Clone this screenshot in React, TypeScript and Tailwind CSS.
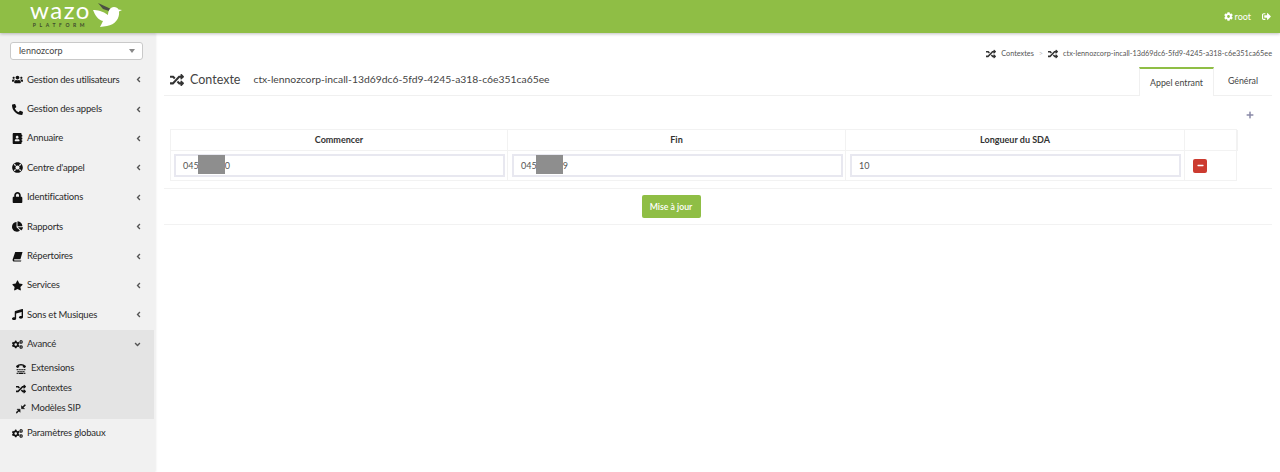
import {
  FaAddressBook,
  FaAngleDown,
  FaAngleLeft,
  FaChartPie,
  FaCog,
  FaCogs,
  FaLifeRing,
  FaLock,
  FaMinus,
  FaMusic,
  FaPhoneAlt,
  FaPlus,
  FaRandom,
  FaSignOutAlt,
  FaStar,
  FaTty,
  FaUsers,
} from "react-icons/fa";
import type { IconType } from "react-icons";

// slanted book, the package's one is upright
const BookIcon: IconType = (props) => (
  <svg viewBox="0 0 12 12" fill="currentColor" {...props}>
    <path d="M3.5 1H11.5L9.2 9H2.8C2.2 9 2 9.6 2.4 10C2.6 10.2 2.9 10.3 3.2 10.3H10.2L9.8 11.5H2.5C1.4 11.5 0.5 10.6 0.7 9.4Z" />
  </svg>
);

// two arrows on the diagonal
const DiagonalIcon: IconType = (props) => (
  <svg viewBox="0 0 12 12" fill="currentColor" stroke="currentColor" strokeWidth="0.7" {...props}>
    <path d="M11.5 1.5L8.8 4.2 10.2 5.6 6.6 5.6 6.6 2 7.9 3.3 10.6 0.6Z" />
    <path d="M0.8 11.2L3.5 8.5 4.9 9.9 4.9 6.3 1.3 6.3 2.6 7.6 0 10.3Z" />
  </svg>
);

const menu: { label: string; icon: IconType }[] = [
  { label: "Gestion des utilisateurs", icon: FaUsers },
  { label: "Gestion des appels", icon: FaPhoneAlt },
  { label: "Annuaire", icon: FaAddressBook },
  { label: "Centre d'appel", icon: FaLifeRing },
  { label: "Identifications", icon: FaLock },
  { label: "Rapports", icon: FaChartPie },
  { label: "Répertoires", icon: BookIcon },
  { label: "Services", icon: FaStar },
  { label: "Sons et Musiques", icon: FaMusic },
];

const subMenu: { label: string; icon: IconType }[] = [
  { label: "Extensions", icon: FaTty },
  { label: "Contextes", icon: FaRandom },
  { label: "Modèles SIP", icon: DiagonalIcon },
];

function Logo() {
  return (
    <div className="ml-[32px] self-start pt-[3px] flex items-start">
      <div className="w-[57px] flex flex-col items-center">
        <span className="h-[14px] text-[24px] leading-[14px] tracking-[1.5px] text-white">wazo</span>
        <span className="mt-[5px] h-[6px] text-[5px] leading-[6px] tracking-[3.6px] text-[#3d4a2c] font-bold whitespace-nowrap">
          PLATFORM
        </span>
      </div>
      <svg viewBox="0 0 30 26" className="w-[30px] h-[26px] -mt-px ml-[4px]">
        <path d="M5 1L18 7 16 9 10 7Z" fill="#4b5043" />
        <path
          d="M0 8C4 8 10 9 15 13C15 9 17 5 21 5C23 5 25 6 25.5 7.5L29 8 26 9.5C27 16 22 23 14 24L7 25 10 19C5 18 2 13 0 8Z"
          fill="#fff"
        />
      </svg>
    </div>
  );
}

function Sidebar() {
  return (
    <aside className="w-[155px] shrink-0 bg-[#f1f1f1] shadow-[1px_0_2px_rgba(0,0,0,0.08)] pt-[9px]">
      <div className="mx-[10px] w-[133px] h-[18px] bg-white border border-[#c9c9c9] rounded-[3px] flex items-center justify-between pl-[8px] pr-[7px] text-[9px] text-[#444]">
        lennozcorp
        <span className="w-0 h-0 border-x-[3px] border-x-transparent border-t-[4px] border-t-[#888]" />
      </div>
      <nav className="mt-[5px] text-[9.5px] tracking-[-0.2px]">
        {menu.map(({ label, icon: Icon }) => (
          <div key={label} className="h-[29.4px] flex items-center pl-[12px] pr-[13px] text-[#2b2b2b]">
            <Icon className="w-[11px] h-[11px] text-[#111] shrink-0" />
            <span className="ml-[4px] flex-1 whitespace-nowrap">{label}</span>
            <FaAngleLeft className="w-[7px] h-[9px] text-[#555]" />
          </div>
        ))}
        <div className="bg-[#e4e4e4] mr-[1px]">
          <div className="h-[29px] flex items-center pl-[12px] pr-[12px] text-[#2b2b2b]">
            <FaCogs className="w-[11px] h-[11px] text-[#111] shrink-0" />
            <span className="ml-[4px] flex-1">Avancé</span>
            <FaAngleDown className="w-[9px] h-[9px] text-[#555]" />
          </div>
          <div className="ml-[1px]">
            {subMenu.map(({ label, icon: Icon }) => (
              <div key={label} className="h-[20px] flex items-center pl-[15px] text-[#2b2b2b]">
                <Icon className="w-[10px] h-[10px] text-[#111] shrink-0" />
                <span className="ml-[5px]">{label}</span>
              </div>
            ))}
          </div>
        </div>
        <div className="h-[30px] flex items-center pl-[12px] text-[#2b2b2b]">
          <FaCogs className="w-[11px] h-[11px] text-[#111] shrink-0" />
          <span className="ml-[4px]">Paramètres globaux</span>
        </div>
      </nav>
    </aside>
  );
}

function NumberInput({ value, maskLeft }: { value: string; maskLeft?: number }) {
  return (
    <div className="relative h-[23px] border-2 border-[#e8e8f0] bg-white flex items-center pl-[7px] text-[9px] text-[#555]">
      {value}
      {maskLeft !== undefined && (
        <span className="absolute top-[-1px] w-[27px] h-[19px] bg-[#8e8e8e]" style={{ left: maskLeft }} />
      )}
    </div>
  );
}

export default function App() {
  return (
    <div className="h-[472px] w-[1280px] overflow-hidden flex flex-col bg-white font-['Lato',sans-serif]">
      <header className="h-[33px] shrink-0 bg-[#8fbe45] shadow-[0_1px_3px_rgba(0,0,0,0.25)] flex items-center justify-between z-10">
        <Logo />
        <div className="flex items-center pr-[9px] text-white text-[9px]">
          <FaCog className="w-[9px] h-[9px]" />
          <span className="ml-[2px]">root</span>
          <FaSignOutAlt className="w-[9px] h-[9px] ml-[11px]" />
        </div>
      </header>
      <div className="flex flex-1">
        <Sidebar />
        <main className="flex-1 pl-[9px] pr-[8px]">
          <div className="h-[34px] pt-[8px] flex items-center justify-end text-[7.3px] text-[#555]">
            <FaRandom className="w-[10px] h-[10px] text-[#333]" />
            <span className="ml-[5px]">Contextes</span>
            <span className="mx-[5px] text-[#bbb]">&gt;</span>
            <FaRandom className="w-[10px] h-[10px] text-[#333]" />
            <span className="ml-[5px]">ctx-lennozcorp-incall-13d69dc6-5fd9-4245-a318-c6e351ca65ee</span>
          </div>
          <div className="h-[29px] border-b border-[#f0f0f0] flex items-end justify-between">
            <div className="h-full flex items-center pl-[6px] pb-[2px]">
              <FaRandom className="w-[14px] h-[14px] text-[#333]" />
              <span className="ml-[6px] text-[12.5px] text-[#444]">Contexte</span>
              <span className="ml-[13px] text-[10.35px] text-[#444]">ctx-lennozcorp-incall-13d69dc6-5fd9-4245-a318-c6e351ca65ee</span>
            </div>
            <div className="flex h-full text-[8.8px] text-[#444]">
              <div className="w-[75px] border-t-2 border-t-[#8fbe45] border-x border-x-[#f0f0f0] bg-white -mb-px flex items-center justify-center">
                Appel entrant
              </div>
              <div className="w-[58px] flex items-center justify-center">Général</div>
            </div>
          </div>
          <div className="pl-[6px]">
            <div className="h-[33px] pt-[4px] flex items-center justify-end pr-[18px]">
              <FaPlus className="w-[8px] h-[8px] text-[#8a8aa8]" />
            </div>
            <div className="grid grid-cols-[337px_338px_339px_53px] border border-[#f2f2f2] w-[1067px]">
              {["Commencer", "Fin", "Longueur du SDA", ""].map((h, i) => (
                <div key={i} className="h-[21px] border-r border-b border-[#f2f2f2] flex items-center justify-center text-[9px] font-bold text-[#333]">
                  {h}
                </div>
              ))}
              <div className="h-[29px] border-r border-[#f2f2f2] pl-[3px] pr-[2px] pt-[3px]">
                <NumberInput value="045000000" maskLeft={22} />
              </div>
              <div className="h-[29px] border-r border-[#f2f2f2] pl-[4px] pr-[2px] pt-[3px]">
                <NumberInput value="045000009" maskLeft={22} />
              </div>
              <div className="h-[29px] border-r border-[#f2f2f2] pl-[4px] pr-[3px] pt-[3px]">
                <NumberInput value="10" />
              </div>
              <div className="h-[29px] flex items-center pl-[8px]">
                <div className="w-[14px] h-[14px] bg-[#cc3b30] rounded-[2px] flex items-center justify-center">
                  <FaMinus className="w-[7px] h-[7px] text-white" />
                </div>
              </div>
            </div>
          </div>
          <div className="mt-[7px] h-[37px] pr-[94px] border-y border-[#f2f2f2] flex items-center justify-center">
            <button className="w-[59px] h-[23px] rounded-[2px] bg-[#8fbe45] text-white text-[8.7px] font-semibold">
              Mise à jour
            </button>
          </div>
        </main>
      </div>
    </div>
  );
}
